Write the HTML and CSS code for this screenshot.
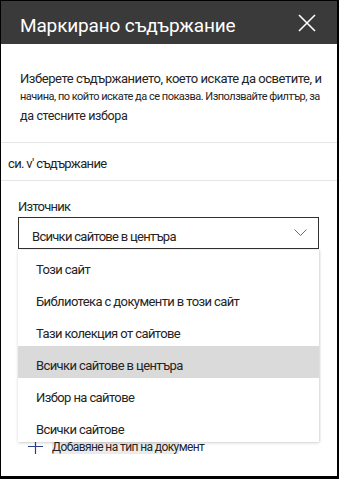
FILE: index.html
```html
<!DOCTYPE html>
<html lang="bg">
<head>
<meta charset="utf-8">
<link rel="stylesheet" href="styles.css">
</head>
<body>
<div class="panel">
  <div class="header">
    <div class="title">Маркирано съдържание</div>
    <svg class="close" width="18" height="18" viewBox="0 0 18 18"><path d="M1 1 L17 17 M17 1 L1 17" stroke="#ffffff" stroke-width="1.6" fill="none"/></svg>
  </div>
  <div class="desc">
    <div class="l1">Изберете съдържанието, което искате да осветите, и</div>
    <div class="l2">начина, по който искате да се показва. Използвайте филтър, за</div>
    <div class="l3">да стесните избора</div>
  </div>
  <div class="section">си. v' съдържание</div>
  <div class="field">
    <div class="label">Източник</div>
    <div class="dd">
      <div class="dd-box">
        <span class="dd-text">Всички сайтове в центъра</span>
        <svg class="chev" width="13" height="7" viewBox="0 0 13 7"><path d="M0.5 0.5 L6.5 6.5 L12.5 0.5" stroke="#6b6b6b" stroke-width="1" fill="none"/></svg>
      </div>
      <div class="menu">
        <div class="item">Този сайт</div>
        <div class="item">Библиотека с документи в този сайт</div>
        <div class="item">Тази колекция от сайтове</div>
        <div class="item sel">Всички сайтове в центъра</div>
        <div class="item">Избор на сайтове</div>
        <div class="item">Всички сайтове</div>
      </div>
    </div>
    <div class="add">
      <svg class="plus" width="15" height="15" viewBox="0 0 15 15"><path d="M7.5 0 V15 M0 7.5 H15" stroke="#2c3c8a" stroke-width="1.2" fill="none"/></svg>
      <span class="add-text"><span class="hl">Добавяне на тип на доку</span>мент</span>
    </div>
  </div>
</div>
</body>
</html>
```
FILE: styles.css
```css
* { box-sizing: border-box; }
html, body { margin: 0; padding: 0; background: #ffffff; }
body { font-family: Roboto, "Liberation Sans", Arial, sans-serif; color: #252423; }
.panel {
  width: 339px;
  height: 479px;
  border: 1px solid #000;
  border-right-width: 2px;
  border-bottom-width: 3px;
  overflow: hidden;
  background: #fff;
}
.header {
  height: 43px;
  background: #3a3a3a;
  display: flex;
  align-items: center;
  justify-content: space-between;
  padding: 0 21px 0 19px;
}
.title {
  color: #ffffff;
  font-size: 19px;
  letter-spacing: -0.15px;
  padding-top: 5px;
  white-space: nowrap;
}
.close { margin-top: 1px; }
.desc {
  padding: 25px 0 0 19px;
  height: 98px;
  white-space: nowrap;
}
.l1 { font-size: 13px; line-height: 19px; letter-spacing: -0.45px; }
.l2 { font-size: 11px; line-height: 18px; letter-spacing: -0.5px; }
.l3 { font-size: 12.5px; line-height: 19px; letter-spacing: -0.35px; }
.section {
  border-top: 1px solid #e6e6e6;
  border-bottom: 1px solid #e6e6e6;
  height: 39px;
  padding: 12px 0 0 7px;
  font-size: 13px;
  line-height: 17px;
  letter-spacing: -0.65px;
}
.field { padding: 17px 18px 0 17px; }
.label { font-size: 13px; line-height: 17px; letter-spacing: -0.75px; }
.dd { position: relative; margin-top: 2px; }
.dd-box {
  height: 32px;
  border: 1px solid #323130;
  display: flex;
  align-items: flex-start;
  justify-content: space-between;
  padding: 10px 11px 0 13px;
}
.dd-text { font-size: 13px; line-height: 17px; letter-spacing: -0.72px; }
.chev { margin-top: 1px; }
.menu {
  position: absolute;
  top: 33px;
  left: 0;
  right: 0;
  background: #fff;
  box-shadow: 0 1px 3px rgba(0,0,0,0.16), 1px 0 2px rgba(0,0,0,0.1);
  z-index: 2;
}
.item {
  height: 32px;
  padding: 11px 0 0 18px;
  font-size: 13px;
  line-height: 17px;
  letter-spacing: -0.6px;
}
.item.sel { background: #dadada; }
.add {
  margin-top: 190px;
  display: flex;
  align-items: flex-start;
  padding-left: 10px;
}
.plus { margin-right: 9px; margin-top: 0; }
.add-text { font-size: 12px; line-height: 17px; letter-spacing: -0.6px; }
.hl { background: #ebebeb; }
```
